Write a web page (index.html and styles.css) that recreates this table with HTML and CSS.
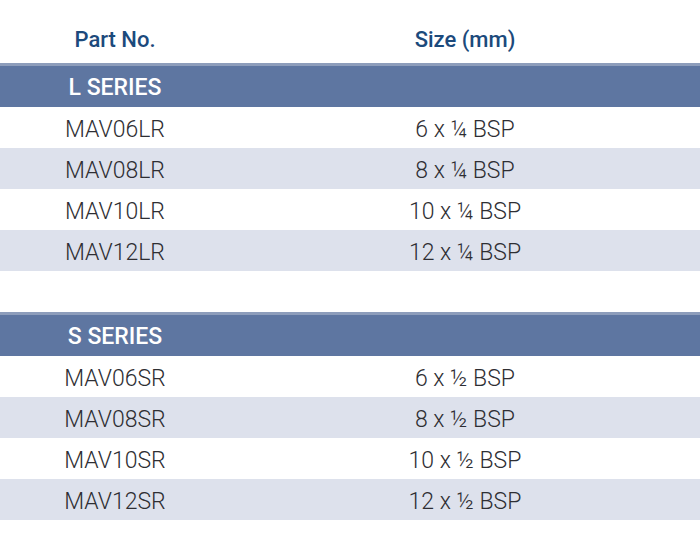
FILE: index.html
```html
<!DOCTYPE html>
<html>
<head>
<meta charset="utf-8">
<link rel="stylesheet" href="styles.css">
</head>
<body>
<div class="table">
  <div class="row head">
    <div class="c1">Part No.</div>
    <div class="c2">Size (mm)</div>
  </div>
  <div class="series"><div class="c1">L SERIES</div></div>
  <div class="row"><div class="c1">MAV06LR</div><div class="c2">6 x ¼ BSP</div></div>
  <div class="row alt"><div class="c1">MAV08LR</div><div class="c2">8 x ¼ BSP</div></div>
  <div class="row"><div class="c1">MAV10LR</div><div class="c2">10 x ¼ BSP</div></div>
  <div class="row alt"><div class="c1">MAV12LR</div><div class="c2">12 x ¼ BSP</div></div>
  <div class="spacer"></div>
  <div class="series"><div class="c1">S SERIES</div></div>
  <div class="row"><div class="c1">MAV06SR</div><div class="c2">6 x ½ BSP</div></div>
  <div class="row alt"><div class="c1">MAV08SR</div><div class="c2">8 x ½ BSP</div></div>
  <div class="row"><div class="c1">MAV10SR</div><div class="c2">10 x ½ BSP</div></div>
  <div class="row alt"><div class="c1">MAV12SR</div><div class="c2">12 x ½ BSP</div></div>
</div>
</body>
</html>
```

FILE: styles.css
```css
html, body {
  margin: 0;
  padding: 0;
  background: #ffffff;
}
.table {
  width: 700px;
  font-family: Roboto, "Liberation Sans", sans-serif;
}
.row, .series {
  display: grid;
  grid-template-columns: 230px 470px;
  align-items: center;
}
.c1, .c2 {
  text-align: center;
}
.row {
  height: 41px;
  box-sizing: border-box;
  padding-top: 3px;
  font-size: 23px;
  font-weight: 300;
  color: #2e2e33;
}
.row.alt {
  background: #dde1ec;
}
.head {
  height: 63px;
  padding-top: 0;
  font-size: 22px;
  font-weight: 500;
  color: #1c4a7c;
  align-items: start;
}
.head .c1, .head .c2 {
  padding-top: 27px;
  line-height: 26px;
}
.series {
  height: 44px;
  box-sizing: border-box;
  padding-top: 2px;
  border-top: 3px solid #8d9dbb;
  background: #5e76a1;
  color: #ffffff;
  font-size: 23px;
  font-weight: 500;
}
.spacer {
  height: 41px;
}
```
